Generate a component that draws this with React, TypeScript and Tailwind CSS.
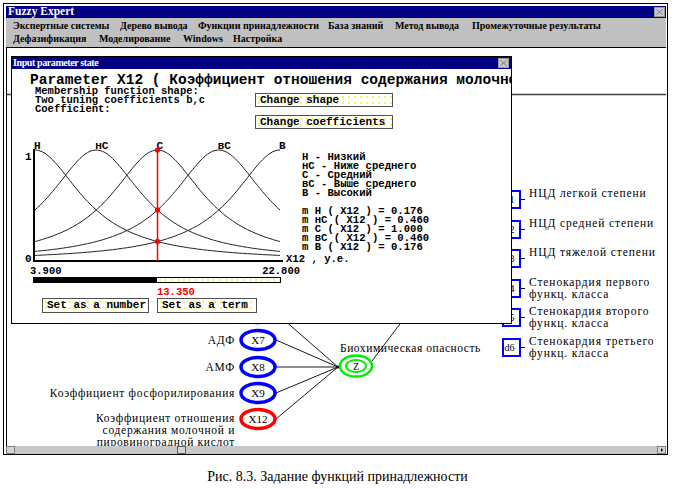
import React from 'react';

// membership curves: 1 / (1 + ((x - c) / b)^2), page coordinates
const PEAKS = [35, 96.25, 157.5, 218.75, 280];
const B = 56.5;
const Y0 = 261;
const H = 111;

const mu = (x: number, c: number) => 1 / (1 + ((x - c) / B) ** 2);

function curvePath(c: number) {
    const pts: string[] = [];
    for (let x = 35; x <= 280.01; x += 2.5) {
        pts.push(`${x.toFixed(1)},${(Y0 - H * mu(x, c)).toFixed(1)}`);
    }
    return 'M' + pts.join(' L');
}

const inputs = [
    { id: 'X6', y: 313, color: '#0000ff', label: [] as string[] },
    { id: 'X7', y: 340, color: '#0000ff', label: ['АДФ'] },
    { id: 'X8', y: 367, color: '#0000ff', label: ['АМФ'] },
    { id: 'X9', y: 393, color: '#0000ff', label: ['Коэффициент фосфорилирования'] },
    { id: 'X12', y: 419, color: '#ff0000', label: ['Коэффициент отношения', 'содержания молочной и', 'пировиноградной кислот'] },
];

const outputs = [
    { id: 'd1', top: 190, label: ['НЦД легкой степени'] },
    { id: 'd2', top: 220, label: ['НЦД средней степени'] },
    { id: 'd3', top: 249, label: ['НЦД тяжелой степени'] },
    { id: 'd4', top: 279, label: ['Стенокардия первого', 'функц. класса'] },
    { id: 'd5', top: 308, label: ['Стенокардия второго', 'функц. класса'] },
    { id: 'd6', top: 338, label: ['Стенокардия третьего', 'функц. класса'] },
];

const CloseBox = () => (
    <div className="w-[11px] h-[10px] bg-[#c8c8c8] border border-[#9a9a9a] flex items-center justify-center">
        <svg width="7" height="6" viewBox="0 0 7 6">
            <path d="M0.5 0.5 L6.5 5.5 M6.5 0.5 L0.5 5.5" stroke="#808080" strokeWidth="1" />
        </svg>
    </div>
);

const DlgButton = ({ className, children }: { className: string; children: React.ReactNode }) => (
    <div className={`${className} border border-[#505050] bg-white bg-[image:radial-gradient(circle,#eeee00_0.6px,transparent_0.9px)] bg-[length:6px_6px] pl-[4px] flex items-center text-[11px] leading-none font-bold font-['Liberation_Mono'] text-black whitespace-nowrap`}>
        {children}
    </div>
);

const Diagram = () => (
    <svg className="absolute inset-0 w-full h-full" viewBox="7 48 659 398" fontFamily="Liberation Serif">
        {/* divider behind the dialog */}
        <line x1="7" y1="94.5" x2="666" y2="94.5" stroke="#404040" strokeWidth="1.5" />

        {/* links into Z */}
        {inputs.map((n) => (
            <line key={n.id + 'l'} x1="276" y1={n.y} x2="338" y2="367" stroke="#000" strokeWidth="0.9" />
        ))}
        <line x1="372" y1="361" x2="433" y2="280" stroke="#000" strokeWidth="0.9" />
        <circle cx="338" cy="367" r="1.6" fill="#000" />

        {/* input nodes */}
        {inputs.map((n) => (
            <g key={n.id}>
                <ellipse cx="258" cy={n.y} rx="17" ry="9.5" fill="#fff" stroke={n.color} strokeWidth="3.5" />
                <text x="258" y={n.y + 4} textAnchor="middle" fontSize="11" fill="#000">{n.id}</text>
                {n.label.map((t, i) => (
                    <text
                        key={i}
                        x="235"
                        y={(n.label.length > 1 ? n.y - 1 : n.y) + i * 12 + 4}
                        textAnchor="end"
                        fontSize="11.5"
                        letterSpacing="0.7"
                        fill="#000"
                    >
                        {t}
                    </text>
                ))}
            </g>
        ))}

        {/* output node Z */}
        <ellipse cx="356" cy="366" rx="16" ry="10.5" fill="#fff" stroke="#00ee00" strokeWidth="2.5" />
        <ellipse cx="356" cy="366" rx="10" ry="6" fill="none" stroke="#00ee00" strokeWidth="2" />
        <text x="356" y="370" textAnchor="middle" fontSize="10" fill="#000">Z</text>
        <text x="340" y="352" fontSize="11.5" letterSpacing="0.55" fill="#000">Биохимическая опасность</text>

        {/* diagnoses */}
        {outputs.map((o) => (
            <g key={o.id}>
                <rect x="503" y={o.top + 1} width="17" height="17" fill="#fff" stroke="#0000ff" strokeWidth="2" />
                <text x="504.5" y={o.top + 13} fontSize="10" fill="#000">{o.id}</text>
                <rect x="515" y={o.top + 10} width="1" height="1" fill="#e0e000" />
                <line x1="521" y1={o.top + 9.5} x2="525" y2={o.top + 9.5} stroke="#000" strokeWidth="1" />
                {o.label.map((t, i) => (
                    <text key={i} x="529" y={o.top + 7 + i * 12} fontSize="11.5" letterSpacing="0.9" fill="#000">{t}</text>
                ))}
            </g>
        ))}
    </svg>
);

const Chart = () => (
    <svg className="w-[288px] h-[137px] shrink-0 overflow-visible" viewBox="12 138 288 137" fontFamily="Liberation Mono" fontWeight="bold">
        {PEAKS.map((c) => (
            <path key={c} d={curvePath(c)} fill="none" stroke="#222" strokeWidth="1" />
        ))}
        <line x1="34" y1="149" x2="34" y2="262" stroke="#000" strokeWidth="2" />
        <line x1="33" y1="261" x2="283" y2="261" stroke="#000" strokeWidth="2" />
        <text x="25" y="160" fontSize="11" fill="#000">1</text>
        <text x="25" y="262" fontSize="11" fill="#000">0</text>
        {['Н', 'нС', 'С', 'вС', 'В'].map((t, i) => (
            <text key={t} x={i === 0 ? 34 : PEAKS[i] - 1} y="149" fontSize="11" fill="#000">{t}</text>
        ))}
        <line x1="157.5" y1="148" x2="157.5" y2="261" stroke="#ff0000" strokeWidth="1.5" />
        {[1, 0.46, 0.176].map((v) => (
            <circle key={v} cx="157.5" cy={Y0 - H * v} r="2.6" fill="#ff0000" />
        ))}
        <text x="30" y="274" fontSize="10.5" fill="#000">3.900</text>
        <text x="300" y="274" textAnchor="end" fontSize="10.5" fill="#000">22.800</text>
    </svg>
);

const Dialog = () => (
    <div className="absolute left-[4px] top-[8px] w-[501px] h-[268px] border border-black bg-white flex flex-col overflow-hidden">
        <div className="h-[12px] shrink-0 bg-[#000080] flex items-center justify-between pl-[1px] pr-[2px]">
            <span className="text-white font-bold text-[10px] leading-none tracking-[-0.4px] font-['Liberation_Serif']">Input parameter state</span>
            <CloseBox />
        </div>

        <div className="mt-[4px] pl-[18px] h-[14px] leading-[14px] whitespace-nowrap font-bold text-[14.5px] font-['Liberation_Mono'] text-black">
            Parameter X12 ( Коэффициент отношения содержания молочной и пировиноградной кислот )
        </div>

        <div className="flex h-[51px] shrink-0">
            <div className="w-[243px] pl-[23px] text-[10.5px] leading-[9px] font-bold font-['Liberation_Mono'] text-black whitespace-nowrap">
                <div>Membership function shape:</div>
                <div>Two tuning coefficients b,c</div>
                <div>Coefficient:</div>
            </div>
            <div className="pt-[6px] flex flex-col gap-[8px]">
                <DlgButton className="w-[138px] h-[14px]">Change shape</DlgButton>
                <DlgButton className="w-[138px] h-[14px]">Change coefficients</DlgButton>
            </div>
        </div>

        <div className="flex h-[137px] shrink-0">
            <Chart />
            <div className="pl-[2px] pt-[15px] text-[10.6px] leading-[9px] font-bold font-['Liberation_Mono'] text-black whitespace-nowrap">
                <div>Н - Низкий</div>
                <div>нС - Ниже среднего</div>
                <div>С - Средний</div>
                <div>вС - Выше среднего</div>
                <div>В - Высокий</div>
                <div className="h-[9px]" />
                <div>m Н ( X12 ) = 0.176</div>
                <div>m нС ( X12 ) = 0.460</div>
                <div>m С ( X12 ) = 1.000</div>
                <div>m вС ( X12 ) = 0.460</div>
                <div>m В ( X12 ) = 0.176</div>
                <div className="mt-[3px] -ml-[16px]">X12 , у.е.</div>
            </div>
        </div>

        <div className="mt-[2px] ml-[21px] w-[248px] h-[6px] shrink-0 border border-black flex">
            <div className="w-[123px] bg-black" />
            <div className="flex-1 bg-white bg-[image:radial-gradient(circle,#eeee00_0.6px,transparent_0.9px)] bg-[length:6px_4px]" />
        </div>

        <div className="mt-[4px] pl-[145px] h-[10px] leading-[10px] text-[10.5px] font-bold font-['Liberation_Mono'] text-[#ff0000]">13.350</div>

        <div className="mt-[1px] pl-[30px] flex gap-[8px]">
            <DlgButton className="w-[107px] h-[15px]">Set as a number</DlgButton>
            <DlgButton className="w-[100px] h-[15px]">Set as a term</DlgButton>
        </div>
    </div>
);

const MainWindow = () => (
    <div className="ml-[3px] mt-[3px] w-[665px] h-[452px] border border-black pt-[2px] pl-[2px] pr-[1px] flex flex-col">
        {/* title bar */}
        <div className="h-[12px] shrink-0 bg-[#000080] flex items-center justify-between pl-[2px] pr-[1px]">
            <span className="text-white font-bold text-[11.5px] leading-none font-['Liberation_Serif']">Fuzzy Expert</span>
            <CloseBox />
        </div>

        {/* menu */}
        <div className="h-[30px] shrink-0 bg-[#c0c0c0] border-b border-black pt-[1px] pl-[7px] text-[10px] leading-[13px] font-bold font-['Liberation_Serif'] text-black whitespace-nowrap">
            <div className="flex">
                <span className="w-[107px]">Экспертные системы</span>
                <span className="w-[78px]">Дерево вывода</span>
                <span className="w-[130px]">Функции принадлежности</span>
                <span className="w-[67px]">База знаний</span>
                <span className="w-[77px]">Метод вывода</span>
                <span>Промежуточные результаты</span>
            </div>
            <div className="flex">
                <span className="w-[86px]">Дефазификация</span>
                <span className="w-[84px]">Моделирование</span>
                <span className="w-[50px]">Windows</span>
                <span>Настройка</span>
            </div>
        </div>

        {/* canvas */}
        <div className="relative h-[398px] shrink-0 border-l border-black overflow-hidden bg-white">
            <Diagram />
            <Dialog />
        </div>

        {/* horizontal scrollbar */}
        <div className="h-[8px] shrink-0 bg-[#c8c8c8] flex items-stretch">
            <div className="w-[9px] border border-[#808080] bg-[#d4d4d4]" />
            <div className="w-[162px]" />
            <div className="w-[9px] border border-[#606060] bg-[#d4d4d4]" />
            <div className="flex-1" />
            <div className="w-[9px] border border-[#808080] bg-[#d4d4d4] flex items-center justify-center">
                <div className="w-0 h-0 border-y-[2px] border-y-transparent border-l-[2px] border-l-black" />
            </div>
        </div>
    </div>
);

export default function App() {
    return (
        <div className="w-[675px] h-[489px] bg-white overflow-hidden">
            <MainWindow />
            <p className="mt-[14px] text-center text-[14px] leading-[16px] font-['Liberation_Serif'] text-black">
                Рис. 8.3. Задание функций принадлежности
            </p>
        </div>
    );
}
